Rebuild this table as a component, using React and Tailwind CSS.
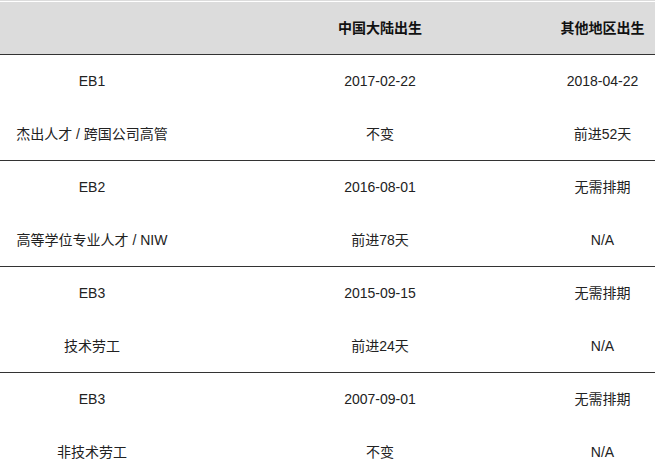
import React from 'react';

const groups = [
  { code: 'EB1', label: '杰出人才 / 跨国公司高管', china: ['2017-02-22', '不变'], other: ['2018-04-22', '前进52天'] },
  { code: 'EB2', label: '高等学位专业人才 / NIW', china: ['2016-08-01', '前进78天'], other: ['无需排期', 'N/A'] },
  { code: 'EB3', label: '技术劳工', china: ['2015-09-15', '前进24天'], other: ['无需排期', 'N/A'] },
  { code: 'EB3', label: '非技术劳工', china: ['2007-09-01', '不变'], other: ['无需排期', 'N/A'] },
];

const Cell = ({ children, bold }) => (
  <div className={`flex items-center justify-center whitespace-nowrap ${bold ? 'font-bold text-[#111]' : 'text-[#222]'}`}>
    {children}
  </div>
);

const App = () => {
  return (
    <div
      className="w-[655px] h-[476px] overflow-hidden bg-white text-[14px]"
      style={{ fontFamily: '"Liberation Sans", "Noto Sans CJK SC", sans-serif' }}
    >
      {/* Header */}
      <div className="border-t border-[#dcdcdc] pt-px">
        <div className="grid grid-cols-[184px_392px_53px] h-[53px] bg-[#dcdcdc] border-b border-[#333]">
          <Cell bold></Cell>
          <Cell bold>中国大陆出生</Cell>
          <Cell bold>其他地区出生</Cell>
        </div>
      </div>

      {/* Body */}
      {groups.map((g, i) => (
        <div key={i} className="border-b border-[#333]">
          <div className="grid grid-cols-[184px_392px_53px] h-[53px]">
            <Cell>{g.code}</Cell>
            <Cell>{g.china[0]}</Cell>
            <Cell>{g.other[0]}</Cell>
          </div>
          <div className="grid grid-cols-[184px_392px_53px] h-[52px]">
            <Cell>{g.label}</Cell>
            <Cell>{g.china[1]}</Cell>
            <Cell>{g.other[1]}</Cell>
          </div>
        </div>
      ))}
    </div>
  );
};

export default App;
